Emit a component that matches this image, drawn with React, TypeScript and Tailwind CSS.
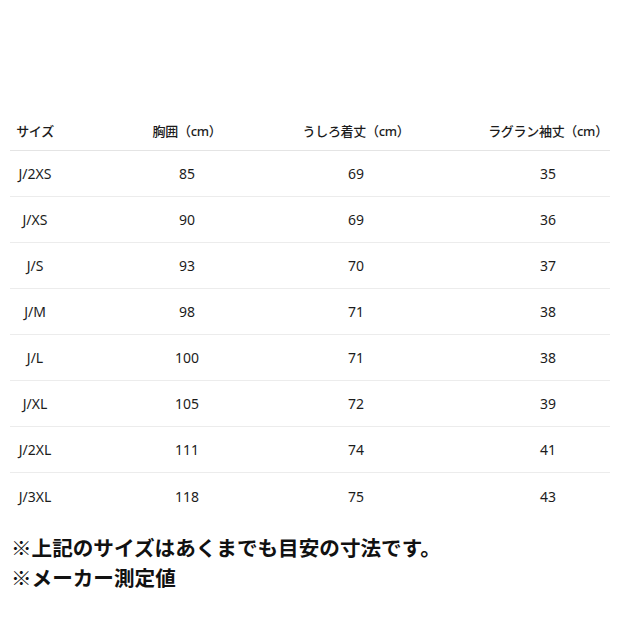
const rows = [
  { size: "J/2XS", chest: 85, length: 69, sleeve: 35 },
  { size: "J/XS", chest: 90, length: 69, sleeve: 36 },
  { size: "J/S", chest: 93, length: 70, sleeve: 37 },
  { size: "J/M", chest: 98, length: 71, sleeve: 38 },
  { size: "J/L", chest: 100, length: 71, sleeve: 38 },
  { size: "J/XL", chest: 105, length: 72, sleeve: 39 },
  { size: "J/2XL", chest: 111, length: 74, sleeve: 41 },
  { size: "J/3XL", chest: 118, length: 75, sleeve: 43 },
];

const headers = ["サイズ", "胸囲（cm）", "うしろ着丈（cm）", "ラグラン袖丈（cm）"];

// column tracks: centres land at 35 / 187 / 356 / 548
const gridCols = "grid grid-cols-[50px_254px_84px_300px]";

export default function App() {
  return (
    <div className="w-[620px] h-[620px] bg-white text-[#1c1c1c] font-['Noto_Sans','Noto_Sans_CJK_JP',sans-serif] overflow-hidden">
      <div className="pt-[114px] px-[10px]">
        {/* Size table */}
        <div className="w-[600px] overflow-hidden text-[14px]">
          <div className={`${gridCols} h-[37px] items-center border-b border-[#e4e4e4]`}>
            {headers.map((h) => (
              <div key={h} className="flex justify-center whitespace-nowrap text-[13px] font-medium tracking-[-0.3px]">
                {h}
              </div>
            ))}
          </div>
          {rows.map((r, i) => (
            <div
              key={r.size}
              className={`${gridCols} h-[46px] items-center ${
                i < rows.length - 1 ? "border-b border-[#ececec]" : ""
              }`}
            >
              <div className="flex justify-center whitespace-nowrap">{r.size}</div>
              <div className="flex justify-center">{r.chest}</div>
              <div className="flex justify-center">{r.length}</div>
              <div className="flex justify-center">{r.sleeve}</div>
            </div>
          ))}
        </div>

        {/* Notes */}
        <div className="mt-[13px] pl-[1px] text-[20.6px] leading-[30px] font-bold text-[#111] font-['Noto_Sans_CJK_JP',sans-serif]">
          <p>※上記のサイズはあくまでも目安の寸法です。</p>
          <p>※メーカー測定値</p>
        </div>
      </div>
    </div>
  );
}
